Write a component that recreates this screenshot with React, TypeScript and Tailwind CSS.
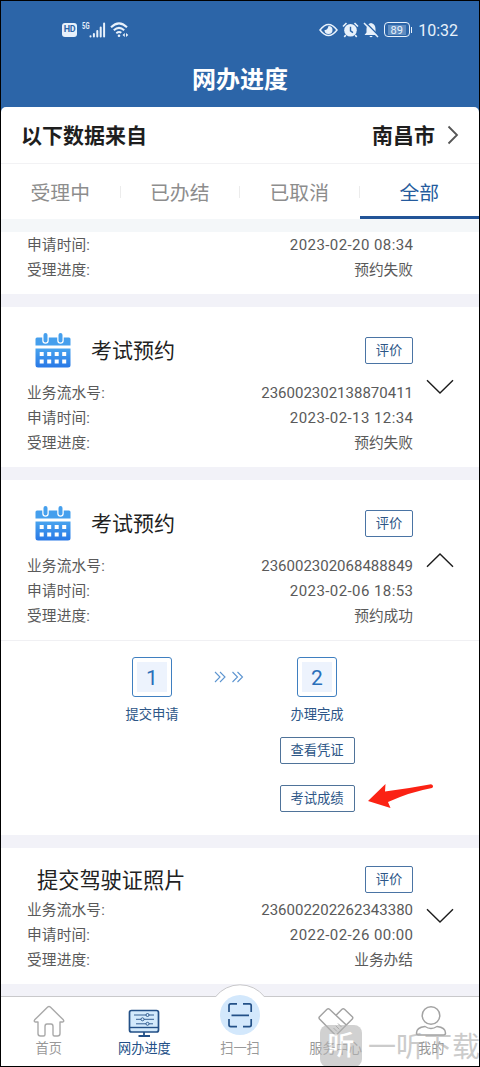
import React from "react";

type RecordRow = { label: string; value: string };

const Chevron = ({ up }: { up?: boolean }) => (
  <svg
    className={up ? "rotate-180" : ""}
    width="28"
    height="16"
    viewBox="0 0 28 16"
    fill="none"
    stroke="#1c1c1c"
    strokeWidth="1.4"
  >
    <path d="M1 1.2 14 14 27 1.2" />
  </svg>
);

const CalendarIcon = () => (
  <svg width="36" height="36" viewBox="0 0 36 36">
    <defs>
      <linearGradient id="cal" x1="0" y1="0" x2="0" y2="1">
        <stop offset="0" stopColor="#48a3ee" />
        <stop offset="1" stopColor="#2878e6" />
      </linearGradient>
    </defs>
    <path
      d="M2 5.5H34Q35.500 5.500 35.500 7V13.500H.5V7Q.5 5.500 2 5.500Z"
      fill="#459fed"
    />
    <path d="M.5 16.500H35.500V33Q35.500 35.500 33 35.500H3Q.5 35.500 .5 33Z" fill="url(#cal)" />
    <g stroke="#fff" strokeWidth="6.500" strokeLinecap="round">
      <path d="M10.500 3V8.500M25.500 3V8.500" />
    </g>
    <g stroke="#459fed" strokeWidth="4" strokeLinecap="round">
      <path d="M10.500 3V8.500M25.500 3V8.500" />
    </g>
    <g fill="#fff">
      {[4.7, 12.2, 19.7, 27.2].map((x) => (
        <React.Fragment key={x}>
          <rect x={x} y="20" width="4" height="4" />
          <rect x={x} y="27.500" width="4" height="4" />
        </React.Fragment>
      ))}
    </g>
  </svg>
);

const Rows = ({ rows }: { rows: RecordRow[] }) => (
  <div>
    {rows.map((row) => (
      <div
        key={row.label}
        className="flex h-[25px] items-center justify-between pt-[2px] text-[14.7px] text-[#5a5a5a]"
      >
        <span className="tracking-[0.15px]">{row.label}</span>
        {row.value.includes(":") ? (
          <span className="-mr-[0.4px] text-[15px] tracking-[0.42px]">{row.value}</span>
        ) : row.value.startsWith("2") ? (
          <span className="text-[15px]">{row.value}</span>
        ) : (
          <span>{row.value}</span>
        )}
      </div>
    ))}
  </div>
);

type CardProps = {
  title: string;
  icon?: boolean;
  open?: boolean;
  rows: RecordRow[];
};

const Card = ({ title, icon, open, rows }: CardProps) => (
  <div className="flex items-center bg-white pb-3 pl-[26px]">
    <div className="w-[386px]">
      <div
        className={
          icon
            ? "flex h-[73px] items-center pt-[13px]"
            : "flex h-[49px] items-center pt-[14px]"
        }
      >
        {icon && (
          <div className="ml-2 mr-5">
            <CalendarIcon />
          </div>
        )}
        <h3
          className={
            icon
              ? "pt-1 text-[21px] text-[#222]"
              : "ml-[10px] pt-[3px] text-[21.200px] text-[#222]"
          }
        >
          {title}
        </h3>
        <button className="ml-auto flex h-[27px] w-[48px] items-center justify-center rounded-[2px] border border-[#4a74a4] pt-px text-[13.300px] text-[#2d5687]">
          评价
        </button>
      </div>
      <Rows rows={rows} />
    </div>
    <div className="ml-[13px] pt-3">
      <Chevron up={open} />
    </div>
  </div>
);

const StepBox = ({ n }: { n: number }) => (
  <div className="flex h-10 w-10 items-center justify-center rounded-[3px] border-[1.5px] border-[#3f7fc0] bg-white">
    <div className="flex h-[30px] w-[30px] items-center justify-center bg-[#edf3fd] pt-[3px] text-[21px] text-[#2a6fba]">
      {n}
    </div>
  </div>
);

const StatusBar = () => (
  <div className="flex h-[57px] items-center justify-between pl-[61px] pr-[21px] text-[#e8f1fb]">
    <div className="flex items-center">
      <span className="flex h-[14px] w-[15px] items-center justify-center rounded-[3px] bg-[#e8f1fb] text-[9px] font-bold tracking-[-0.3px] text-[#2c65a8]">
        HD
      </span>
      <svg className="ml-1" width="26" height="18" viewBox="0 0 26 18">
        <text x="1" y="7.500" fontSize="8.500" fontWeight="bold" fill="currentColor" textLength="7.500" lengthAdjust="spacingAndGlyphs">
          5G
        </text>
        <g stroke="currentColor" strokeWidth="2" strokeLinecap="round">
          <path d="M9.500 15.300V15.600M12.900 13V15.600M16.300 10V15.600M19.700 6.500V15.600M23.100 2.500V15.600" />
        </g>
      </svg>
      <svg className="ml-[3px]" width="20" height="18" viewBox="0 0 20 18" fill="none" stroke="currentColor" strokeWidth="2">
        <path d="M1 6.300Q9 -1.500 17 6.300M3.800 9.300Q9 4.500 14.200 9.300M6.300 12.200Q9 10 11.300 11.800" />
        <circle cx="9" cy="14.800" r="1.300" fill="currentColor" stroke="none" />
        <path d="M14.800 12 12.500 14 14.800 16ZM16 12 18.300 14 16 16Z" fill="currentColor" stroke="none" />
      </svg>
    </div>
    <div className="flex items-center">
      <svg width="19" height="14" viewBox="0 0 19 14" fill="none" stroke="currentColor" strokeWidth="1.500">
        <path d="M1 7Q9.500-4 18 7Q9.500 18 1 7Z" />
        <path d="M9.500 3A4 4 0 1 1 5.500 7Q8.500 7.500 9.500 3Z" fill="currentColor" stroke="none" />
      </svg>
      <svg className="ml-1" width="17" height="16" viewBox="0 0 17 16" fill="none">
        <circle cx="8.500" cy="8.300" r="6.300" fill="currentColor" />
        <path d="M1 4.500 4.500 1M16 4.500 12.500 1M3.800 13 2.300 15M13.200 13 14.700 15" stroke="currentColor" strokeWidth="1.600" />
        <path d="M8.500 4.800V8.800L11 10.600" stroke="#2c65a8" strokeWidth="1.400" />
      </svg>
      <svg className="ml-1" width="16" height="16" viewBox="0 0 16 16" fill="none">
        <path d="M8 1Q12.500 1.800 12.500 7V10.500L14.500 13H1.500L3.500 10.500V7Q3.500 1.800 8 1ZM6.300 14H9.700Q8 16.500 6.300 14Z" fill="currentColor" />
        <path d="M2.300.2 16 14" stroke="#2c65a8" strokeWidth="1.500" />
        <path d="M1 1 15 15" stroke="currentColor" strokeWidth="1.500" />
      </svg>
      <div className="ml-[5px] flex h-[15px] w-[26px] items-center justify-center rounded-[4px] border-[1.5px] border-[#e8f1fb]">
        <span className="flex h-[10px] w-[18px] items-center justify-center bg-[#5f8cc0] pt-px text-[11px] leading-none">
          89
        </span>
      </div>
      <div className="ml-px h-[6px] w-[1.500px] bg-[#e8f1fb]" />
      <span className="ml-[6px] pt-[2px] text-[16px]">10:32</span>
    </div>
  </div>
);

const HomeIcon = () => (
  <svg width="32" height="32" viewBox="0 0 32 32" fill="none" stroke="#a9a9a9" strokeWidth="1.400" strokeLinejoin="round">
    <path d="M14.700 2Q16 .8 17.300 2L30.300 14.800Q31.500 16.500 29.500 17H27V28.500Q27 31 24.500 31H21.500Q20 31 20 29.500V21.500Q20 19 18 19H14Q12 19 12 21.500V29.500Q12 31 10.500 31H7.500Q5 31 5 28.500V17H2.500Q.5 16.500 1.700 14.800Z" />
  </svg>
);

const MonitorIcon = () => (
  <svg width="32" height="28" viewBox="0 0 32 28" fill="none" stroke="#235087">
    <rect x="1.500" y="1.500" width="29" height="21.500" rx="2" fill="#d3eafc" strokeWidth="1.700" />
    <path d="M2 18.500H30" strokeWidth="1.400" />
    <path d="M16 23V26.500M10.500 27H22" strokeWidth="1.800" />
    <g strokeWidth=".9">
      <path d="M6 6H18M21 6H26M8 10.300H13M16 10.300H26M8 14.800H18M21 14.800H25" />
      <circle cx="19.500" cy="6" r="1.500" />
      <circle cx="14.500" cy="10.300" r="1.500" />
      <circle cx="19.500" cy="14.800" r="1.500" />
    </g>
  </svg>
);

const ServiceIcon = () => (
  <svg width="36" height="30" viewBox="0 0 36 30" fill="none" stroke="#a3a3a3" strokeWidth="1.500" strokeLinejoin="round">
    <path d="M9 2.300Q10.300 1.200 11.500 2.300L28.300 18 19 27.300Q17.800 28.300 16.500 27.300L1.500 12Q.5 10.800 1.500 9.700Z" />
    <path d="M18 8.200 24 2.300Q25.300 1.200 26.500 2.300L34.300 9.700Q35.300 10.800 34.300 12L28.300 18" />
    <path d="M15.500 21 19 24.500M17.800 18.800 21.300 22.300M20 16.500 23.500 20" strokeWidth="1" />
  </svg>
);

const UserIcon = () => (
  <svg width="32" height="32" viewBox="0 0 32 32" fill="none" stroke="#a3a3a3" strokeWidth="1.500">
    <circle cx="16" cy="10.500" r="8.800" />
    <path d="M10 21.500Q13 23.500 16 23.500T22 21.500Q30.500 22.500 30.500 28Q30.500 30 28.500 30H3.500Q1.500 30 1.500 28Q1.500 22.500 10 21.500Z" strokeLinejoin="round" />
  </svg>
);

const ScanIcon = () => (
  <svg width="40" height="40" viewBox="0 0 40 40" fill="none" stroke="#235087" strokeWidth="1.700">
    <circle cx="20" cy="20" r="20" fill="#d3e8fc" stroke="none" />
    <path d="M9 17V10.500Q9 8.800 10.700 8.800H17M23 8.800H29.500Q31.200 8.800 31.200 10.500V17M31.200 24V30Q31.200 31.600 29.500 31.600H23M17 31.600H10.700Q9 31.600 9 30V24M11.500 20.300H29" />
  </svg>
);

const navItems = [
  { label: "首页", icon: <HomeIcon /> },
  { label: "网办进度", icon: <MonitorIcon />, active: true },
  { label: "扫一扫", icon: <ScanIcon /> },
  { label: "服务中心", icon: <ServiceIcon /> },
  { label: "我的", icon: <UserIcon /> },
];

const BottomNav = () => (
  <nav className="relative h-[70px] shrink-0 border-t border-[#c9c9cb] bg-white">
    {/* raised arc behind the scan button */}
    <svg className="absolute -top-[13px] left-[208px]" width="62" height="22" viewBox="0 0 62 22">
      <path d="M5 22V13H6.500A31 31 0 0 1 55.500 13H57V22Z" fill="#fff" />
      <path d="M6.500 12.800A31 31 0 0 1 55.500 12.800" fill="none" stroke="#c9c9cb" />
    </svg>
    <div className="relative -mt-[2px] grid h-[72px] grid-cols-5">
      {navItems.map((item) => (
        <div
          key={item.label}
          className={
            item.active
              ? "flex flex-col items-center text-[13.2px] text-[#235087]"
              : "flex flex-col items-center text-[13.2px] text-[#999]"
          }
        >
          <div
            className={
              item.label === "扫一扫"
                ? "flex h-[44px] items-start"
                : "flex h-[44px] items-end pb-[2px]"
            }
          >
            {item.icon}
          </div>
          <span className="leading-5">{item.label}</span>
        </div>
      ))}
    </div>
  </nav>
);

const App = () => {
  return (
    <div className="relative flex h-[1067px] w-[480px] flex-col overflow-hidden border border-black bg-[#f2f2f8] font-[Roboto,'Noto_Sans_CJK_SC',sans-serif]">
      {/* Header */}
      <header className="h-[106px] shrink-0 bg-[#2c65a8]">
        <StatusBar />
        <h1 className="text-center text-[24px] font-bold leading-[44px] text-white">
          网办进度
        </h1>
      </header>

      {/* City picker */}
      <div className="shrink-0 bg-[#2c65a8]">
        <section className="flex h-[57px] items-center justify-between rounded-t-[5px] border-b border-[#f2f2f4] bg-white pl-[20px] pr-[20px] text-[21px] font-bold text-[#1e1e1e]">
          <span className="pt-1">以下数据来自</span>
          <div className="flex items-center gap-3">
            <span className="pt-1">南昌市</span>
            <svg width="12" height="20" viewBox="0 0 12 20" fill="none" stroke="#555" strokeWidth="1.800">
              <path d="M1.500 1.500 10 10 1.500 18.500" />
            </svg>
          </div>
        </section>
      </div>

      {/* Tabs */}
      <div className="grid h-[55px] shrink-0 grid-cols-4 items-stretch bg-white text-[19.800px] text-[#8d8d8d]">
        {["受理中", "已办结", "已取消"].map((tab) => (
          <div key={tab} className="flex items-center">
            <span className="flex-1 pt-1 text-center">{tab}</span>
            <span className="h-3 w-px bg-[#ececec]" />
          </div>
        ))}
        <div className="flex items-center justify-center border-b-[3px] border-[#225497] pt-[7px] text-[#255b9d]">
          全部
        </div>
      </div>

      {/* Records */}
      <main className="flex flex-1 flex-col">
        <div className="h-[13px] bg-[#f4f7f9]" />
        <div className="h-[62px] bg-white pl-[26px]">
          <div className="w-[386px]">
            <Rows
              rows={[
                { label: "申请时间:", value: "2023-02-20 08:34" },
                { label: "受理进度:", value: "预约失败" },
              ]}
            />
          </div>
        </div>
        <div className="h-[13px]" />
        <Card
          title="考试预约"
          icon
          rows={[
            { label: "业务流水号:", value: "236002302138870411" },
            { label: "申请时间:", value: "2023-02-13 12:34" },
            { label: "受理进度:", value: "预约失败" },
          ]}
        />
        <div className="h-[13px]" />
        <Card
          title="考试预约"
          icon
          open
          rows={[
            { label: "业务流水号:", value: "236002302068488849" },
            { label: "申请时间:", value: "2023-02-06 18:53" },
            { label: "受理进度:", value: "预约成功" },
          ]}
        />

        {/* Step progress */}
        <div className="flex h-[195px] items-start border-t border-[#f0f0f3] bg-white pl-[111px] pt-4 text-[13.300px] text-[#2d5687]">
          <div className="flex w-20 flex-col items-center">
            <StepBox n={1} />
            <span className="mt-2 leading-5">提交申请</span>
          </div>
          <svg className="ml-[22px] mt-[14px]" width="30" height="12" viewBox="0 0 30 12" fill="none" stroke="#5d95d0" strokeWidth="1.100">
            <path d="M1 1 6 6 1 11M6 1 11 6 6 11M18.500 1 23.500 6 18.500 11M23.500 1 28.500 6 23.500 11" />
          </svg>
          <div className="ml-[33px] flex w-20 flex-col items-center">
            <StepBox n={2} />
            <span className="mt-2 leading-5">办理完成</span>
            <button className="mt-3 h-[27px] w-[75px] rounded-[2px] border border-[#4f7399]">
              查看凭证
            </button>
            <button className="mt-[21px] h-[27px] w-[75px] rounded-[2px] border border-[#4f7399]">
              考试成绩
            </button>
          </div>
          <svg className="ml-[11px] mt-[126px]" width="66" height="26" viewBox="0 0 66 26">
            <path d="M0 18 17.500 1 17 8.500Q40 5.500 63 1.200Q66.500 2.500 64 5Q42 9 20 19L22.500 25Z" fill="#fb2214" />
          </svg>
        </div>
        <div className="h-[13px]" />
        <Card
          title="提交驾驶证照片"
          rows={[
            { label: "业务流水号:", value: "236002202262343380" },
            { label: "申请时间:", value: "2022-02-26 00:00" },
            { label: "受理进度:", value: "业务办结" },
          ]}
        />
      </main>

      <BottomNav />

      {/* Watermark */}
      <div className="pointer-events-none absolute left-[319px] top-[1024px] flex items-center gap-[6px] whitespace-nowrap text-[#aaa] opacity-60">
        <div className="flex h-[42px] w-[42px] items-center justify-center rounded-lg bg-[#b3b3b3] text-[27px] font-medium leading-none text-white">
          听
        </div>
        <span className="pt-[3px] text-[28px] leading-[32px]">一听下载</span>
      </div>
    </div>
  );
};

export default App;
